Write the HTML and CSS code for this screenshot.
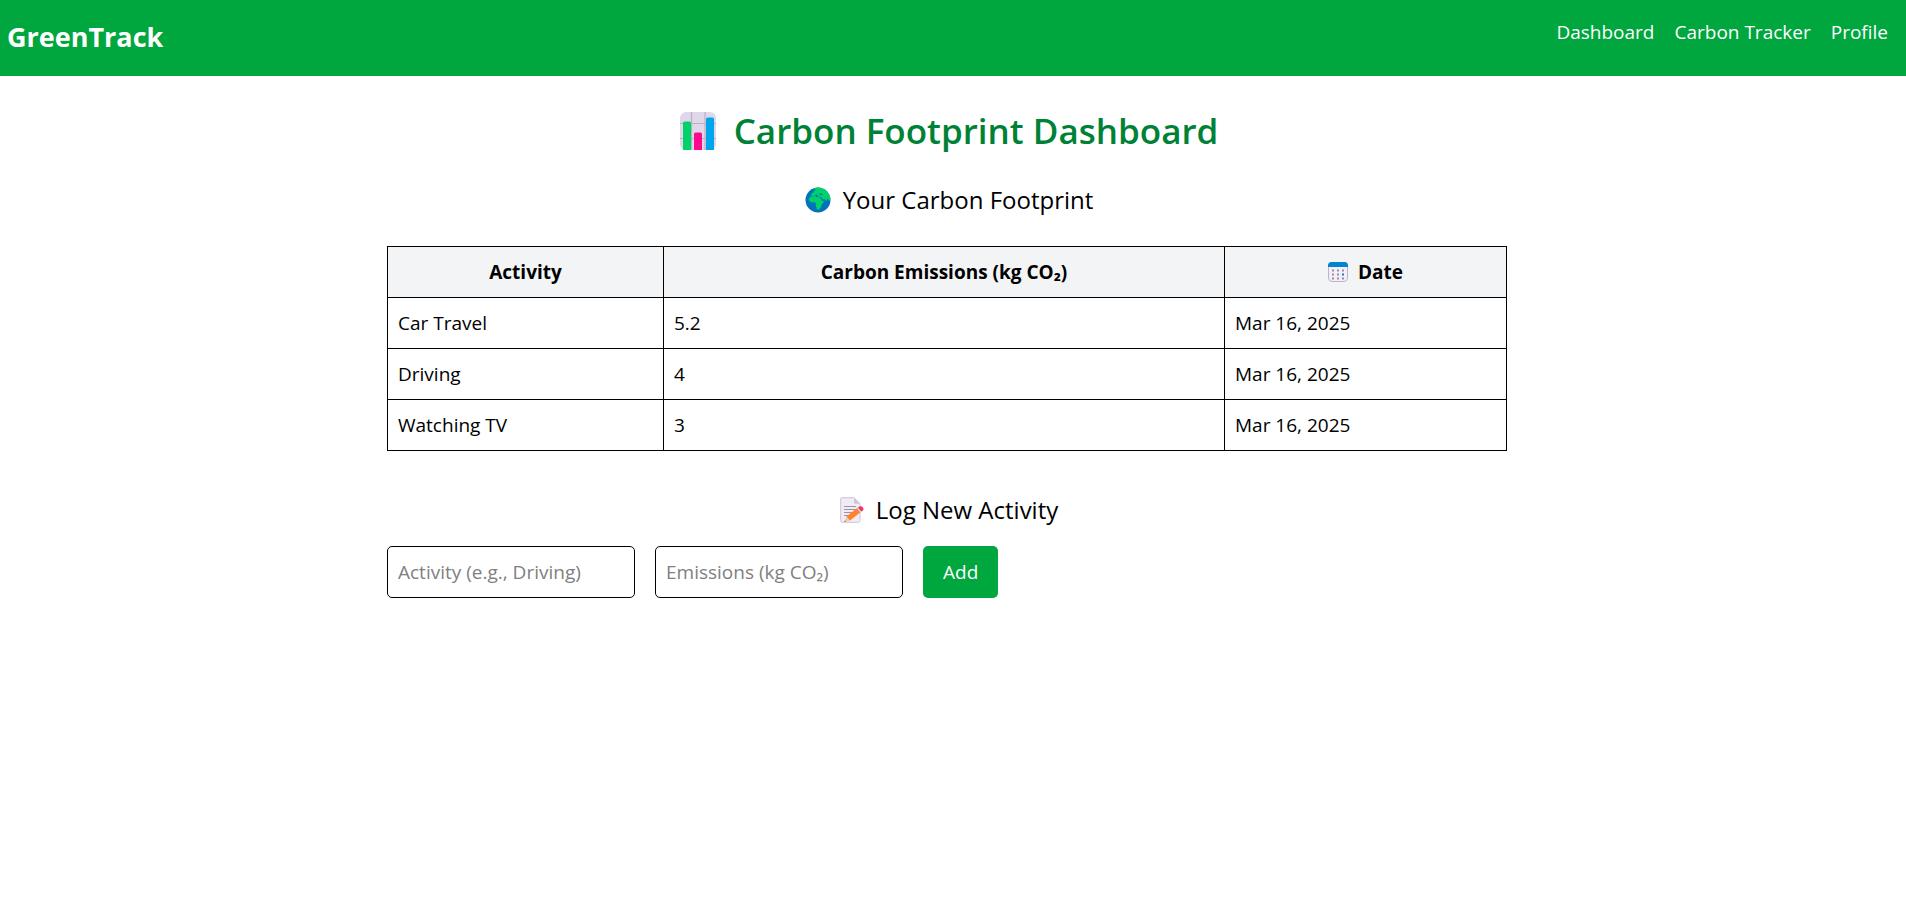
FILE: index.html
```html
<!DOCTYPE html>
<html lang="en">
<head>
<meta charset="utf-8">
<meta name="viewport" content="width=device-width, initial-scale=1">
<title>GreenTrack</title>
<link rel="stylesheet" href="styles.css">
</head>
<body>
<header class="site-header">
  <div class="brand">GreenTrack</div>
  <nav class="site-nav">
    <a href="#dashboard">Dashboard</a>
    <a href="#tracker">Carbon Tracker</a>
    <a href="#profile">Profile</a>
  </nav>
</header>
<main class="page">
  <h1 class="page-title">
    <svg class="icon-chart" viewBox="0 0 36 38" aria-hidden="true">
      <rect width="36" height="38" rx="6" fill="#e0d8ea"/>
      <path d="M11.500 0v38M25 0v38M0 11.500h36M0 26.500h36" stroke="#b8b0c0" stroke-width="1.200"/>
      <path d="M3 38V11q0-1.500 1.500-1.500h5q1.500 0 1.500 1.500v27z" fill="#00d26a"/>
      <path d="M14 38V22q0-1.500 1.500-1.500h5q1.500 0 1.500 1.500v16z" fill="#fc0a8e"/>
      <path d="M26 38V7q0-1.500 1.500-1.500h5q1.500 0 1.500 1.500v31z" fill="#00a6ed"/>
    </svg>
    <span>Carbon Footprint Dashboard</span>
  </h1>
  <section class="footprint">
    <h2 class="section-title">
      <svg class="icon-globe" viewBox="0 0 26 26" aria-hidden="true">
        <circle cx="13" cy="13" r="12.500" fill="#0074ba"/>
        <path d="M3.500 12.500L5.500 9.800 10 9l1.500 1 3.500.3 1.800 3.500 2 .3-.5 1.600-2 2-.3 2.300-2.500 2.800-1.400-.3-1.300-3.700.2-2.300-1-1.300-4 .1z" fill="#00d26a"/>
        <path d="M9.500 1.200Q15-.8 20 2.700q5 3.800 5.400 9.300l-1.200 2-1.600-2.500-1.600 2.700-1.600-2.400-1.700.7-1.800-2.600-2.900-.4-.7-1.500-1.300-.8-1 1.500-3.800.3.200-2.600 2-.8.500-1.500 1.500-.8.300-.9-1.700.3z" fill="#00d26a"/>
        <path d="M13.500 7.300l1.800-1.300 2.700 1.500-2 .6z" fill="#0074ba"/>
      </svg>
      <span>Your Carbon Footprint</span>
    </h2>
    <table class="log-table">
      <colgroup><col class="col-activity"><col class="col-emissions"><col class="col-date"></colgroup>
      <thead>
        <tr>
          <th scope="col">Activity</th>
          <th scope="col">Carbon Emissions (kg CO₂)</th>
          <th scope="col"><span class="date-head">
            <svg class="icon-calendar" viewBox="0 0 20 20" aria-hidden="true">
              <rect x=".5" y=".5" width="19" height="19" rx="3.500" fill="#f3eef8" stroke="#c0b2cc"/>
              <path d="M0 5V3.500Q0 0 3.500 0h13Q20 0 20 3.500V5z" fill="#0084ce"/>
              <path d="M4 7.500h2v2H4zM9 7.500h2v2H9zM14 7.500h2v2h-2zM4 11.500h2v2H4zM9 11.500h2v2H9zM4 15.500h2v2H4zM9 15.500h2v2H9zM14 15.500h2v2h-2z" fill="#998ea4"/>
              <path d="M14 11.500h2v2h-2z" fill="#0084ce"/>
            </svg>
            <span>Date</span>
          </span></th>
        </tr>
      </thead>
      <tbody>
        <tr><td>Car Travel</td><td>5.2</td><td>Mar 16, 2025</td></tr>
        <tr><td>Driving</td><td>4</td><td>Mar 16, 2025</td></tr>
        <tr><td>Watching TV</td><td>3</td><td>Mar 16, 2025</td></tr>
      </tbody>
    </table>
  </section>
  <section class="new-activity">
    <h2 class="section-title">
      <svg class="icon-note" viewBox="0 0 24 26" aria-hidden="true">
        <path d="M2 .7h12l6 6V23.500q0 1.800-1.800 1.800H2Q.7 25.300.7 23.500V2Q.7.700 2 .7z" fill="#f1ebf6" stroke="#cdc4d6"/>
        <path d="M14 .7v4.500q0 1.500 1.500 1.500H20z" fill="#cdc4d6"/>
        <path d="M4 9.500h12M4 12.500h12M4 15.500h8M4 18.500h5" stroke="#9b93a6"/>
        <path d="M6.500 19.500l-2 5.300 5.500-1.300z" fill="#f3c99a"/>
        <path d="M4.900 23.500l-.5 1.400 1.500-.4z" fill="#4a3b42"/>
        <path d="M6.500 19.500L17 11l3.500 4.300L10 23.500z" fill="#ff822d"/>
        <path d="M16.800 11.200l1.700-1.300 3.300 4.200-1.700 1.300z" fill="#d3cbe0"/>
        <path d="M18 10.500l1.500-1.100q1.800-.8 3.200.8t.3 3.200l-1.600 1.200z" fill="#f8315f"/>
      </svg>
      <span>Log New Activity</span>
    </h2>
    <form class="activity-form">
      <input class="field" type="text" name="activity" aria-label="Activity" placeholder="Activity (e.g., Driving)">
      <input class="field" type="text" name="emissions" aria-label="Emissions" placeholder="Emissions (kg CO₂)">
      <button class="add-button" type="button">Add</button>
    </form>
  </section>
</main>
</body>
</html>
```
FILE: styles.css
```css
* {
  box-sizing: border-box;
}

body {
  margin: 0;
  background: #fff;
  color: #000;
  font-family: "Open Sans", "Noto Sans", sans-serif;
  font-size: 19px;
  line-height: 30px;
}

.site-header {
  display: flex;
  justify-content: space-between;
  padding: 17px 18px 19px 7px;
  background: #00a63e;
  color: #fff;
}

.brand {
  font-size: 27px;
  font-weight: 700;
  line-height: 40px;
}

.site-nav {
  display: flex;
  gap: 20px;
}

.site-nav a {
  color: inherit;
  text-decoration: none;
}

.page {
  max-width: 1132px;
  margin: 0 auto;
  padding: 30px 12px 30px 0;
}

.page-title,
.section-title {
  display: flex;
  align-items: center;
  justify-content: center;
  margin: 0;
  padding-left: 4px;
}

.page-title {
  gap: 18px;
  color: #008236;
  font-size: 35px;
  font-weight: 600;
  line-height: 50px;
}

.section-title {
  gap: 12px;
  font-size: 24px;
  font-weight: 400;
  line-height: 36px;
}

.icon-chart {
  width: 36px;
  height: 38px;
}

.icon-globe {
  width: 26px;
  height: 26px;
}

.icon-calendar {
  width: 20px;
  height: 20px;
}

.icon-note {
  width: 24px;
  height: 26px;
}

.footprint {
  padding-top: 26px;
}

.log-table {
  width: 100%;
  margin-top: 28px;
  border-collapse: collapse;
  table-layout: fixed;
}

.col-activity {
  width: 276px;
}

.col-date {
  width: 282px;
}

.log-table th,
.log-table td {
  padding: 10px;
  border: 1px solid #000;
}

.log-table th {
  background: #f3f4f6;
  font-weight: 700;
}

.log-table td {
  text-align: left;
}

.date-head {
  display: flex;
  align-items: center;
  justify-content: center;
  gap: 10px;
}

.new-activity {
  padding-top: 41px;
}

.activity-form {
  display: flex;
  gap: 20px;
  margin-top: 18px;
}

.field {
  width: 248px;
  padding: 10px;
  border: 1px solid #000;
  border-radius: 5px;
  background: #fff;
  color: #000;
  font: inherit;
}

.field::placeholder {
  color: #808080;
  opacity: 1;
}

.add-button {
  padding: 11px 20px;
  border: 0;
  border-radius: 5px;
  background: #00a63e;
  color: #fff;
  font: inherit;
}
```
